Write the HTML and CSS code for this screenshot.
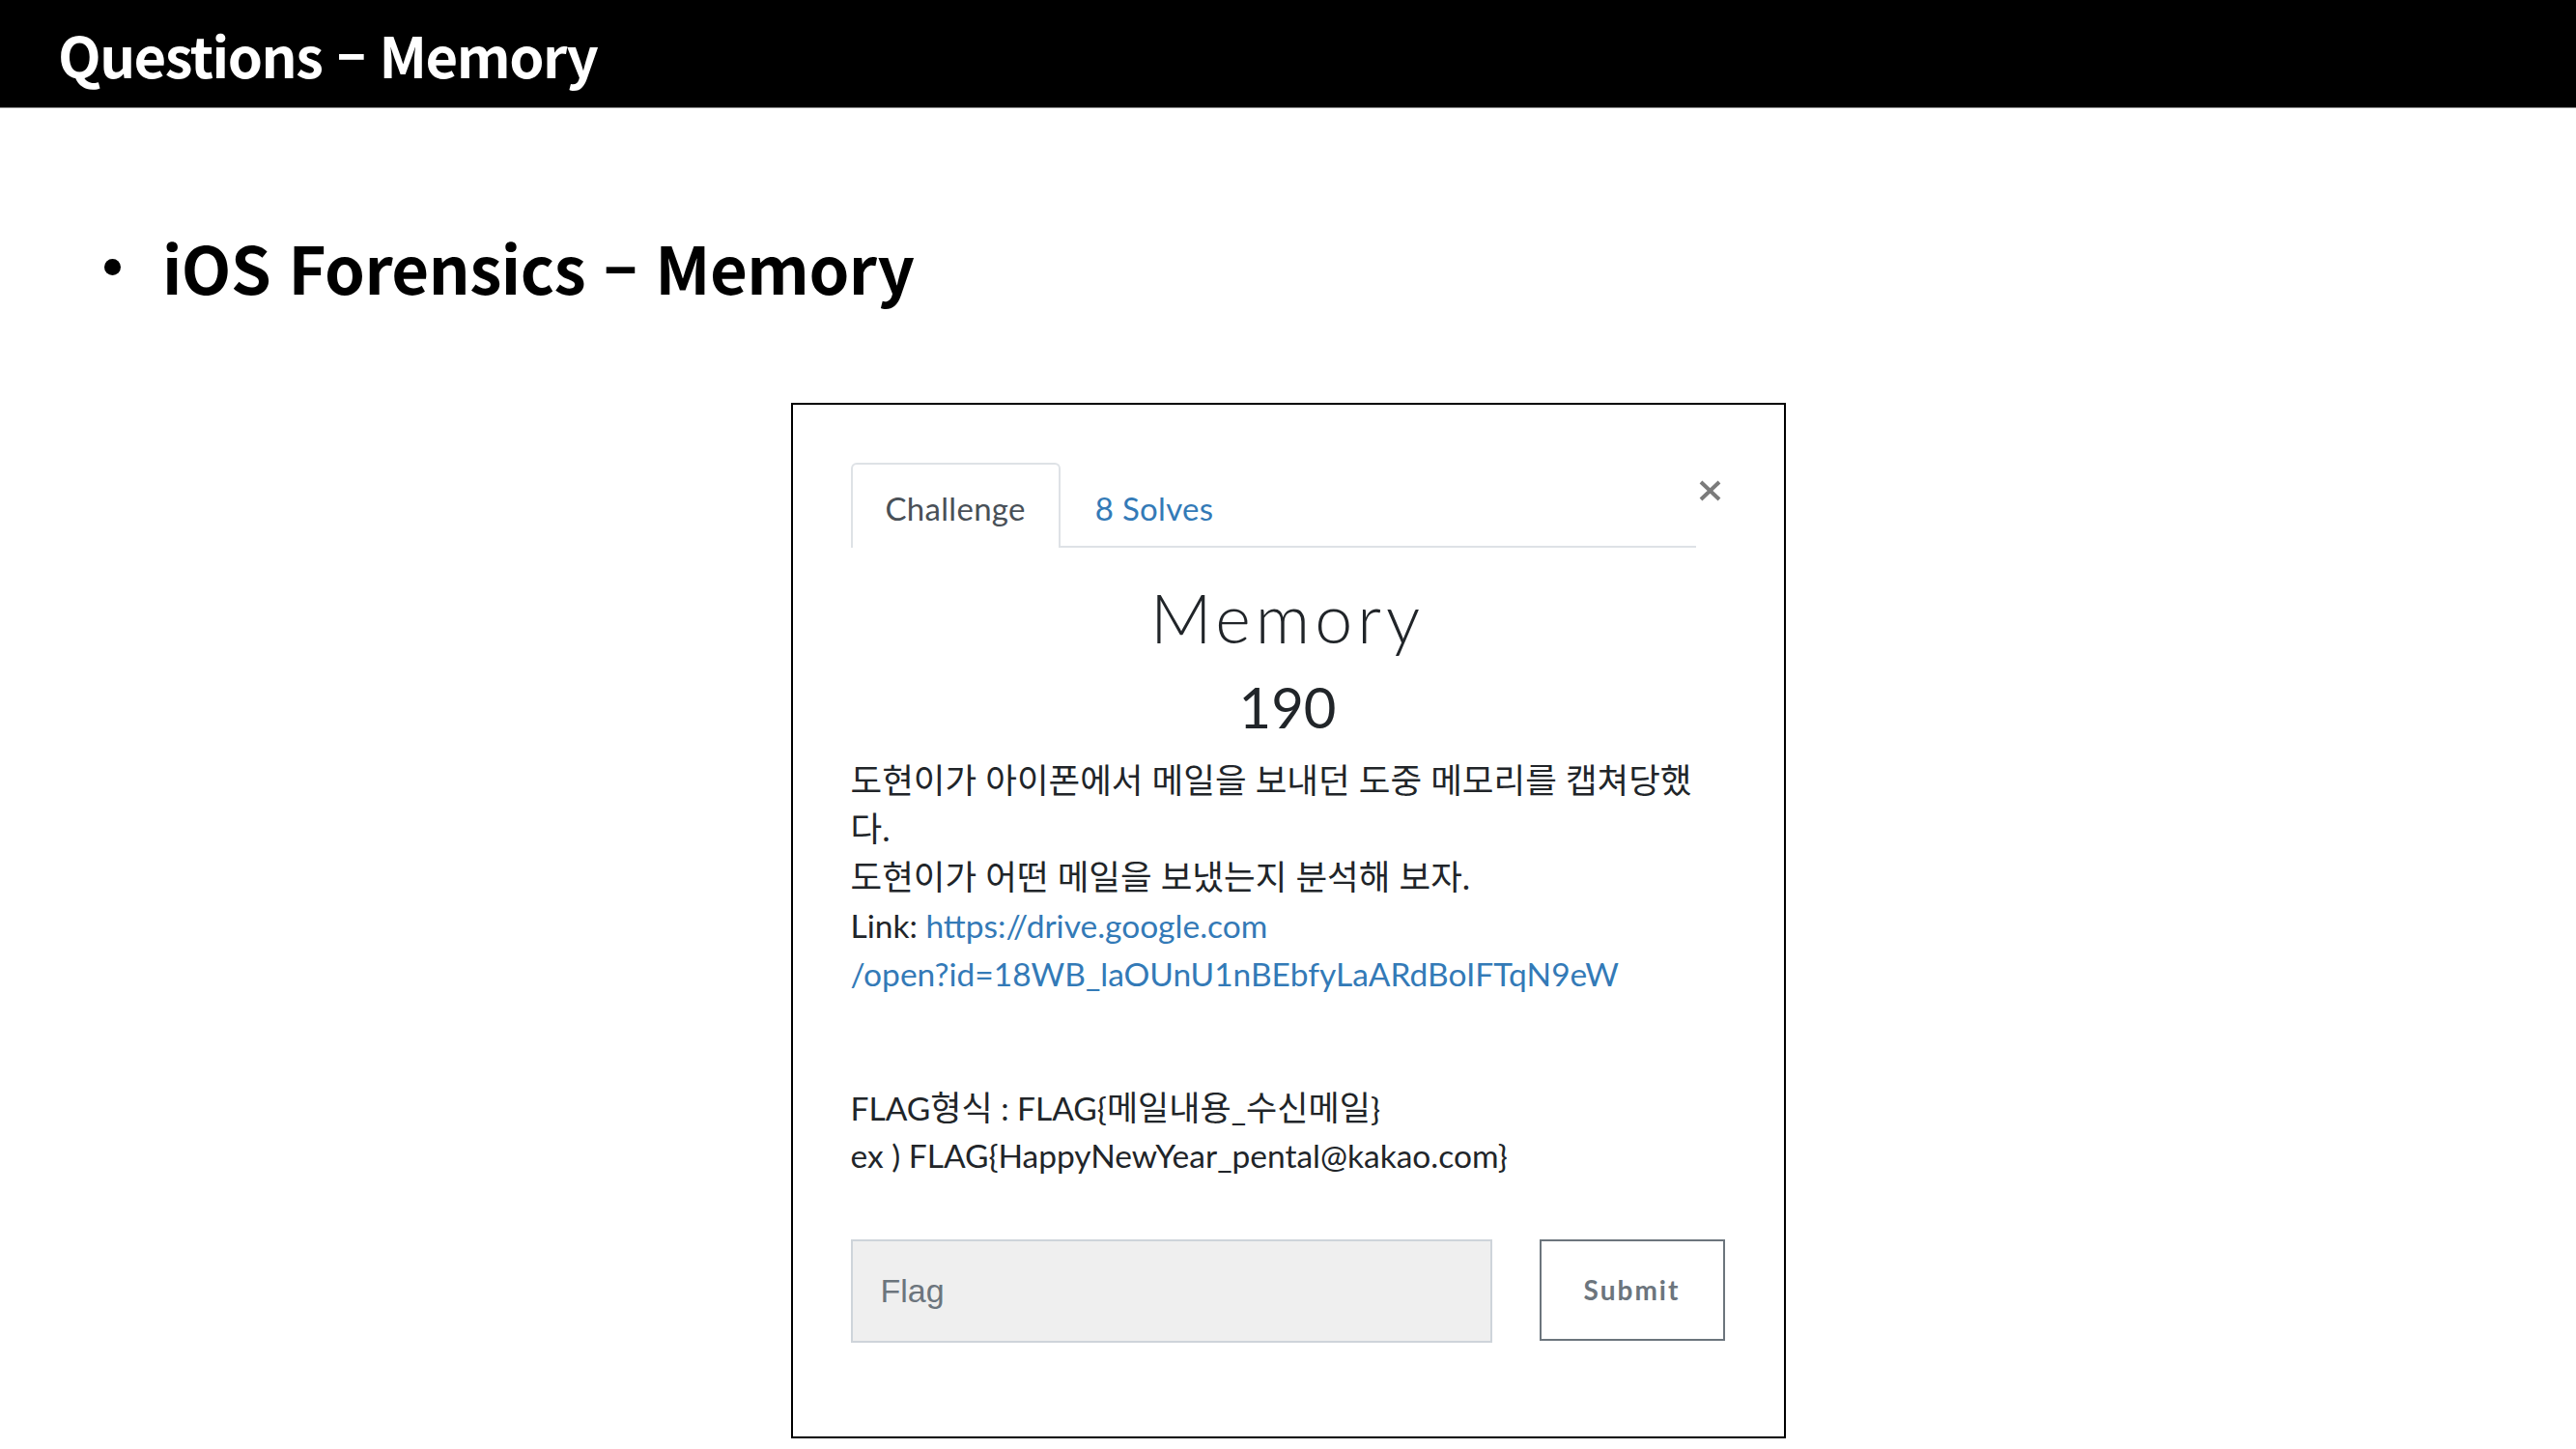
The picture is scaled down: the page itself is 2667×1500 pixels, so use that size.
FILE: index.html
```html
<!DOCTYPE html>
<html lang="ko">
<head>
  <meta charset="UTF-8">
  <meta name="viewport" content="width=device-width, initial-scale=1">
  <title>Questions – Memory</title>
  <link rel="stylesheet" href="styles.css">
</head>
<body>
  <header class="slide-header">
    <h1>Questions – Memory</h1>
  </header>

  <div class="bullet">
    <span class="bullet-dot"></span>
    <span class="bullet-text">iOS Forensics – Memory</span>
  </div>

  <!-- 문제 모달 캡처 -->
  <div class="modal">
    <div class="modal-top">
      <ul class="tabs">
        <li class="tab active">Challenge</li>
        <li class="tab"><a href="#">8 Solves</a></li>
      </ul>
      <button class="close" aria-label="Close">
        <svg width="23" height="22" viewBox="0 0 23 22">
          <path d="M2 2 L21 20 M21 2 L2 20" stroke="#7b7b7b" stroke-width="4" fill="none"/>
        </svg>
      </button>
    </div>

    <h2 class="challenge-name">Memory</h2>
    <h3 class="challenge-value">190</h3>

    <div class="desc">
      <div class="line ko">도현이가 아이폰에서 메일을 보내던 도중 메모리를 캡쳐당했</div>
      <div class="line ko">다.</div>
      <div class="line ko">도현이가 어떤 메일을 보냈는지 분석해 보자.</div>
      <div class="line">Link: <a href="#">https://drive.google.com</a></div>
      <div class="line"><a href="#">/open?id=18WB_laOUnU1nBEbfyLaARdBoIFTqN9eW</a></div>
      <div class="line gap">FLAG<span class="ko">형식</span> : FLAG{<span class="ko">메일내용</span>_<span class="ko">수신메일</span>}</div>
      <div class="line">ex ) FLAG{HappyNewYear_pental@kakao.com}</div>
    </div>

    <form class="flag-form" onsubmit="return false;">
      <input class="flag-input" type="text" placeholder="Flag">
      <button class="submit" type="submit">Submit</button>
    </form>
  </div>
</body>
</html>
```

FILE: styles.css
```css
* {
  box-sizing: border-box;
  margin: 0;
  padding: 0;
}

body {
  background: #ffffff;
  font-family: "Noto Sans CJK KR", sans-serif;
  color: #000;
}

/* 슬라이드 제목 */
.slide-header {
  height: 112px;
  background: #000;
  border-bottom: 1px solid #8a8a8a;
  display: flex;
  align-items: center;
  padding-left: 60px;
}

.slide-header h1 {
  color: #fff;
  font-size: 58px;
  font-weight: 700;
  letter-spacing: -1.5px;
  line-height: 1;
}

.bullet {
  display: flex;
  align-items: center;
  height: 100px;
  margin-top: 114px;
  padding-left: 108px;
}

.bullet-dot {
  width: 17px;
  height: 17px;
  border-radius: 50%;
  background: #000;
  margin-right: 43px;
}

.bullet-text {
  font-size: 67px;
  font-weight: 700;
  letter-spacing: -0.5px;
  line-height: 100px;
}

/* 모달 */
.modal {
  width: 1030px;
  margin: 91px auto 0;
  border: 2px solid #000;
  padding: 60px 61px 97px 60px;
  font-family: Lato, "Noto Sans CJK KR", sans-serif;
  color: #212529;
}

.modal-top {
  display: flex;
}

.tabs {
  flex: 1;
  display: flex;
  list-style: none;
  border-bottom: 2px solid #dee2e6;
}

.tab {
  font-size: 33px;
  letter-spacing: 0.3px;
  line-height: 38px;
  padding: 26px 34px 21px;
  border: 2px solid transparent;
  border-bottom: none;
  margin-bottom: -2px;
  color: #495057;
}

.tab.active {
  border-color: #dee2e6;
  border-radius: 6px 6px 0 0;
  background: #fff;
  height: 88px;
}

.tab a {
  color: #337ab7;
  text-decoration: none;
}

.close {
  width: 30px;
  border: none;
  background: none;
  display: flex;
  align-items: flex-start;
  padding: 18px 0 0 3px;
}

.challenge-name {
  text-align: center;
  font-size: 70px;
  font-weight: 300;
  letter-spacing: 5px;
  line-height: 1.2;
  margin-top: 30px;
}

.challenge-value {
  text-align: center;
  font-size: 58px;
  font-weight: 400;
  line-height: 1.2;
  margin-top: 16px;
}

.desc {
  margin-top: 16px;
  font-size: 33.5px;
}

.desc .line {
  height: 50px;
  line-height: 50px;
  white-space: nowrap;
}

.desc .ko {
  font-size: 35.5px;
}

.desc .line .ko {
  font-size: 35px;
}

.desc .line.gap {
  margin-top: 88px;
}

.desc a {
  color: #337ab7;
  text-decoration: none;
}

.flag-form {
  display: flex;
  margin-top: 62px;
}

.flag-input {
  width: 664px;
  height: 107px;
  background: #efefef;
  border: 2px solid #ced4da;
  padding-left: 29px;
  font-family: "Liberation Sans", Arial, sans-serif;
  font-size: 34px;
  color: #495057;
}

.flag-input::placeholder {
  color: #6c757d;
}

.submit {
  width: 192px;
  height: 105px;
  margin-left: 49px;
  background: #fff;
  border: 2px solid #6c757d;
  color: #6c757d;
  font-family: Lato, sans-serif;
  font-size: 28px;
  font-weight: 700;
  letter-spacing: 2px;
}
```
